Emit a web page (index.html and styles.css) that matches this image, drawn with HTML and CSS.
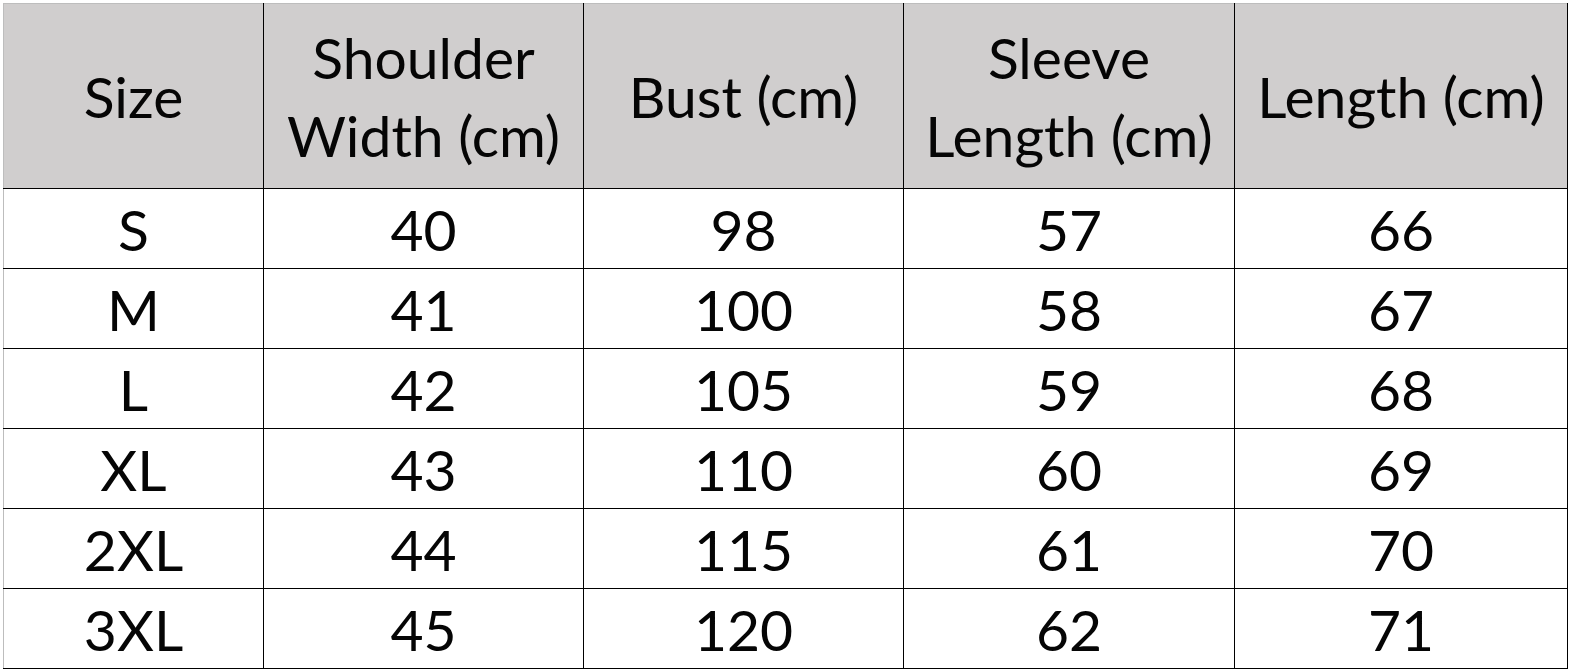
FILE: index.html
```html
<!DOCTYPE html>
<html>
<head>
<meta charset="utf-8">
<link rel="stylesheet" href="styles.css">
</head>
<body>
<div class="sheet">
  <table class="chart">
    <colgroup>
      <col class="c1"><col class="c2"><col class="c3"><col class="c4"><col class="c5">
    </colgroup>
    <thead>
      <tr>
        <th>Size</th>
        <th>Shoulder<br>Width (cm)</th>
        <th>Bust (cm)</th>
        <th>Sleeve<br>Length (cm)</th>
        <th>Length (cm)</th>
      </tr>
    </thead>
    <tbody>
      <tr><td>S</td><td>40</td><td>98</td><td>57</td><td>66</td></tr>
      <tr><td>M</td><td>41</td><td>100</td><td>58</td><td>67</td></tr>
      <tr><td>L</td><td>42</td><td>105</td><td>59</td><td>68</td></tr>
      <tr><td>XL</td><td>43</td><td>110</td><td>60</td><td>69</td></tr>
      <tr><td>2XL</td><td>44</td><td>115</td><td>61</td><td>70</td></tr>
      <tr><td>3XL</td><td>45</td><td>120</td><td>62</td><td>71</td></tr>
    </tbody>
  </table>
</div>
</body>
</html>
```
FILE: styles.css
```css
html, body {
  margin: 0;
  padding: 0;
  background: #ffffff;
}
body {
  font-family: "Lato", "Open Sans", sans-serif;
  color: #000;
}
.sheet {
  padding: 3px 0 0 3px;
  width: 1570px;
  box-sizing: border-box;
  background: #fff;
}
.chart {
  border-collapse: collapse;
  table-layout: fixed;
  width: 1565px;
  border-top: 1px solid #bdbdbd;
  border-left: 1px solid #bdbdbd;
}
.c1 { width: 260px; }
.c2 { width: 320px; }
.c3 { width: 320px; }
.c4 { width: 331px; }
.c5 { width: 333px; }
.chart th, .chart td {
  padding: 0;
  text-align: center;
  vertical-align: middle;
  font-size: 57px;
  line-height: 78px;
  font-weight: 400;
  color: #050505;
}
.chart th {
  background: #d0cece;
  height: 184px;
  border-left: 1px solid #000;
  border-right: 1px solid #000;
  border-bottom: 1px solid #000;
  border-top: 1px solid #bdbdbd;
}
.chart th:first-child { border-left: 1px solid #bdbdbd; }
.chart td {
  height: 79px;
  border: 1px solid #000;
  background: #fff;
}
.chart td:first-child { border-left: 1px solid #bdbdbd; }
```
